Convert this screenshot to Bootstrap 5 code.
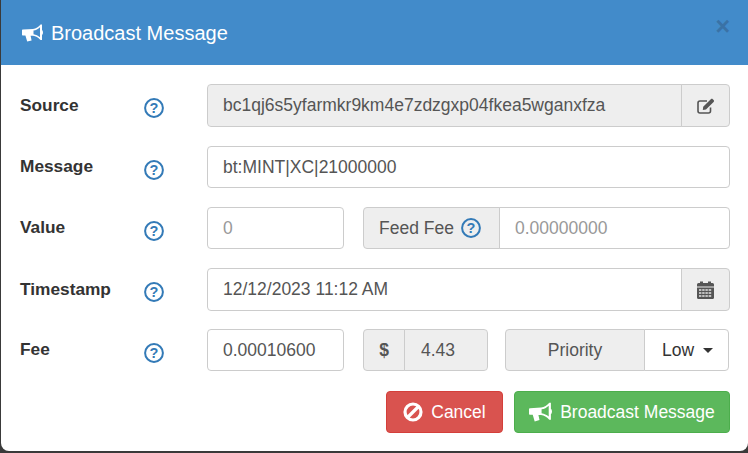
<!DOCTYPE html>
<html lang="en">

<head>
    <meta charset="UTF-8">
    <meta name="viewport" content="width=device-width, initial-scale=1.0">
    <link href="https://cdn.jsdelivr.net/npm/bootstrap@5.3.0/dist/css/bootstrap.min.css" rel="stylesheet">
    <title>Broadcast Message</title>
    <style>
        html, body {
            height: 453px;
            overflow: hidden;
        }

        body {
            background-color: #3a3a3a;
            font-family: "Liberation Sans", Arial, sans-serif;
            font-size: 17.5px;
            color: #555;
            padding: 0 0 2px 1px;
        }

        .dialog-box {
            height: 451px;
            background-color: #fff;
            border-radius: 0 0 8px 8px;
            overflow: hidden;
        }

        .dialog-head {
            height: 65px;
            background-color: #428bca;
            color: #fff;
            padding: 0 18px 12px 21px;
            align-items: center;
        }

        .dialog-head h5 {
            font-size: 20px;
            font-weight: 400;
            margin: 12px 0 0;
        }

        .head-close {
            color: #3a72a6;
            font-size: 25px;
            font-weight: 700;
            line-height: 1;
        }

        .dialog-body {
            padding: 19px 18px 0 19px;
        }

        .form-line {
            margin-bottom: 19px;
            height: 42px;
        }

        .form-line.tall {
            height: 43px;
        }

        .form-line.tight {
            margin-bottom: 18px;
        }

        .line-label {
            width: 124px;
            flex: none;
            font-size: 17.3px;
            font-weight: 700;
            color: #333;
        }

        .line-help {
            width: 63px;
            flex: none;
            padding: 6px 0 0 0;
        }

        .form-line.tall .line-help {
            padding-top: 5px;
        }

        .help-mark {
            color: #337ab7;
            display: block;
        }

        .fld {
            font-size: 17.5px;
            color: #555;
            border-color: #ccc;
            padding: 6px 15px;
            border-radius: 4px;
            height: 100%;
        }

        .fld::placeholder {
            color: #999;
        }

        .fld:disabled {
            background-color: #eee;
        }

        .fld-addon {
            font-size: 17.5px;
            color: #555;
            background-color: #eee;
            border-color: #ccc;
            border-radius: 4px;
            padding: 6px 13px;
        }

        .narrow-fld {
            width: 137px;
            flex: none;
        }

        .feed-group {
            margin-left: 19px;
            flex: 1;
            height: 100%;
            width: auto;
        }

        .feed-addon {
            width: 137px;
            padding: 6px 15px;
            gap: 7px;
        }

        .price-group {
            margin-left: 19px;
            width: 125px;
            height: 100%;
            flex: none;
        }

        .price-group .fld-addon {
            width: 42px;
            justify-content: center;
            font-weight: 700;
            padding: 0;
        }

        .price-group .fld {
            padding: 6px 12px 6px 16px;
        }

        .prio-group {
            margin-left: 17px;
            width: 224px;
            height: 100%;
            flex: none;
        }

        .prio-label {
            width: 140px;
            justify-content: center;
        }

        .prio-btn {
            flex: 1;
            font-size: 17.5px;
            color: #333;
            background-color: #fff;
            border: 1px solid #ccc;
            border-radius: 0 4px 4px 0;
            padding: 0 0 0 2px;
            margin-left: -1px;
        }

        .prio-btn::after {
            margin-left: 9px;
            vertical-align: 3px;
            color: #333;
        }

        .foot-btn {
            font-size: 17.5px;
            height: 42px;
            border-radius: 4px;
            color: #fff;
            padding: 0;
            gap: 8px;
        }

        .cancel-btn {
            width: 117px;
            background-color: #d9534f;
            border: 1px solid #d43f3a;
        }

        .send-btn {
            width: 216px;
            background-color: #5cb85c;
            border: 1px solid #4cae4c;
        }

        .foot-line {
            gap: 11px;
            margin-top: 20px;
        }

        .addon-icon {
            padding: 0;
            width: 49px;
            justify-content: center;
        }
    </style>
</head>

<body>
    <svg class="d-none">
        <symbol id="horn" viewBox="0 0 21 18">
            <path fill-rule="evenodd" d="M1 5.5 L11 5 C14 4.6 16.5 3 18.5 .5 L20 .5 L20 6 C21.3 7 21.3 10 20 11 L20 16 L18.5 16 C16 13.5 14 12.3 11 11.8 L8.6 11.8 L9.6 16.4 L5.2 17.6 L3.4 11.6 L1 11.6 C.4 11.6 0 11.2 0 10.6 L0 6.5 C0 5.9 .4 5.5 1 5.5 Z M11.5 6.6 L11.5 10.2 C14 10.6 16 11.6 18 13.2 L18 3.2 C16 5 14 6.2 11.5 6.6 Z"/>
        </symbol>
        <symbol id="help" viewBox="0 0 20 20">
            <circle cx="10" cy="10" r="8.9" fill="none" stroke="currentColor" stroke-width="2"/>
            <text x="10" y="15.2" text-anchor="middle" font-family="Liberation Sans" font-weight="700" font-size="14.5" fill="currentColor">?</text>
        </symbol>
    </svg>

    <div class="dialog-box">
        <div class="dialog-head d-flex justify-content-between">
            <h5 class="d-flex align-items-center gap-2">
                <svg width="21" height="18" fill="#fff"><use href="#horn"/></svg>
                Broadcast Message
            </h5>
            <span class="head-close">&times;</span>
        </div>
        <form class="dialog-body">
            <div class="form-line tall d-flex align-items-center">
                <div class="line-label">Source</div>
                <div class="line-help"><svg class="help-mark" width="20" height="20"><use href="#help"/></svg></div>
                <div class="input-group flex-fill h-100">
                    <input class="form-control fld" disabled value="bc1qj6s5yfarmkr9km4e7zdzgxp04fkea5wganxfza">
                    <span class="input-group-text fld-addon addon-icon">
                        <svg width="18" height="16" viewBox="0 0 18 16"><path d="M13.5 9.5 V13 A2 2 0 0 1 11.5 15 H3 A2 2 0 0 1 1 13 V5 A2 2 0 0 1 3 3 H10" fill="none" stroke="#555" stroke-width="1.6"/><path d="M6.2 8.8 L13.8 1.2 C14.5 .6 15.2 .6 15.8 1.2 L16.6 2 C17.2 2.6 17.2 3.3 16.6 4 L9 11.4 L5.8 12 Z" fill="#555"/></svg>
                    </span>
                </div>
            </div>
            <div class="form-line d-flex align-items-center">
                <div class="line-label">Message</div>
                <div class="line-help"><svg class="help-mark" width="20" height="20"><use href="#help"/></svg></div>
                <input class="form-control fld flex-fill" value="bt:MINT|XC|21000000">
            </div>
            <div class="form-line d-flex align-items-center">
                <div class="line-label">Value</div>
                <div class="line-help"><svg class="help-mark" width="20" height="20"><use href="#help"/></svg></div>
                <input class="form-control fld narrow-fld" placeholder="0">
                <div class="input-group feed-group">
                    <span class="input-group-text fld-addon feed-addon">Feed Fee
                        <svg class="help-mark" width="20" height="20"><use href="#help"/></svg>
                    </span>
                    <input class="form-control fld" placeholder="0.00000000">
                </div>
            </div>
            <div class="form-line tall tight d-flex align-items-center">
                <div class="line-label">Timestamp</div>
                <div class="line-help"><svg class="help-mark" width="20" height="20"><use href="#help"/></svg></div>
                <div class="input-group flex-fill h-100">
                    <input class="form-control fld" value="12/12/2023 11:12 AM">
                    <span class="input-group-text fld-addon addon-icon">
                        <svg width="17" height="18" viewBox="0 0 17 18"><path d="M1.5 2 H3 V.5 H6 V2 H11 V.5 H14 V2 H15.5 A1.5 1.5 0 0 1 17 3.5 V5.4 H0 V3.5 A1.5 1.5 0 0 1 1.5 2 Z" fill="#555"/><path d="M0 6.4 H17 V16.5 A1.5 1.5 0 0 1 15.5 18 H1.5 A1.5 1.5 0 0 1 0 16.5 Z" fill="#555"/><path d="M2 9 H15 M2 12 H15 M2 15 H15" stroke="#e4e4e4" stroke-width="1.4" stroke-dasharray="2.4 .8" fill="none"/></svg>
                    </span>
                </div>
            </div>
            <div class="form-line d-flex align-items-center">
                <div class="line-label">Fee</div>
                <div class="line-help"><svg class="help-mark" width="20" height="20"><use href="#help"/></svg></div>
                <input class="form-control fld narrow-fld" value="0.00010600">
                <div class="input-group price-group">
                    <span class="input-group-text fld-addon">$</span>
                    <input class="form-control fld" disabled value="4.43">
                </div>
                <div class="input-group prio-group">
                    <span class="input-group-text fld-addon prio-label">Priority</span>
                    <button type="button" class="dropdown-toggle prio-btn">Low</button>
                </div>
            </div>
            <div class="foot-line d-flex justify-content-end">
                <button type="button" class="btn foot-btn cancel-btn d-inline-flex align-items-center justify-content-center">
                    <svg width="20" height="20" viewBox="0 0 20 20"><circle cx="10" cy="10" r="8" fill="none" stroke="#fff" stroke-width="3.2"/><path d="M4.5 15.5 L15.5 4.5" stroke="#fff" stroke-width="3.2"/></svg>
                    Cancel
                </button>
                <button type="button" class="btn foot-btn send-btn d-inline-flex align-items-center justify-content-center">
                    <svg width="23" height="20" fill="#fff"><use href="#horn"/></svg>
                    Broadcast Message
                </button>
            </div>
        </form>
    </div>

    <script src="https://cdn.jsdelivr.net/npm/bootstrap@5.3.0/dist/js/bootstrap.bundle.min.js"></script>
</body>

</html>
